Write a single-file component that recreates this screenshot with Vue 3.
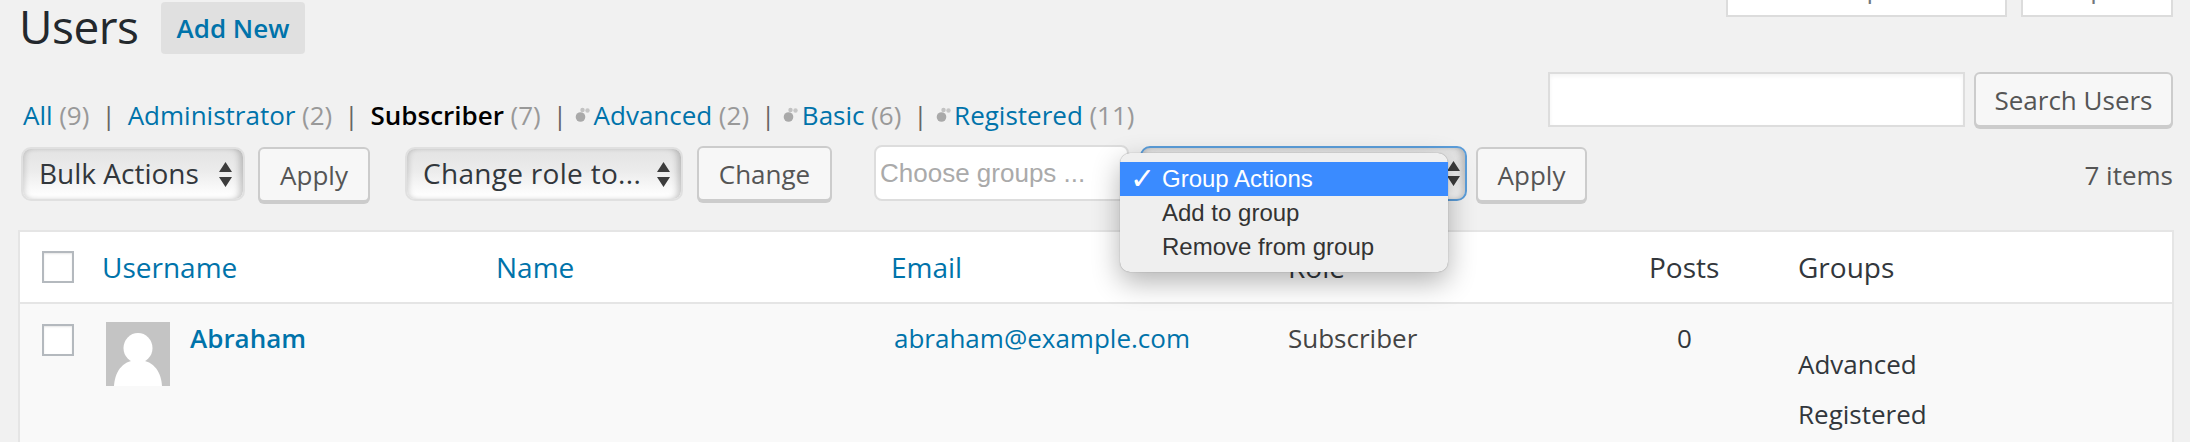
<script setup>
const tabs = [
  { label: 'All', count: 9, icon: false },
  { label: 'Administrator', count: 2, icon: false },
  { label: 'Subscriber', count: 7, icon: false, current: true },
  { label: 'Advanced', count: 2, icon: true },
  { label: 'Basic', count: 6, icon: true },
  { label: 'Registered', count: 11, icon: true }
]
</script>

<template>
  <div class="page">
    <header class="head">
      <div class="title-wrap">
        <h1>Users</h1>
        <a class="add-new">Add New</a>
      </div>
      <div class="meta">
        <div class="meta-btn screen"><span>Screen Options</span></div>
        <div class="meta-btn help"><span>Help</span></div>
      </div>
    </header>

    <div class="filter-row">
      <ul class="subnav">
        <li v-for="(t, i) in tabs" :key="t.label" class="tab">
          <span v-if="i" class="sep">|</span>
          <svg v-if="t.icon" class="dots" width="15" height="16" viewBox="0 0 15 16">
            <circle cx="5.5" cy="10" r="4.8" fill="#a9a9a9" />
            <circle cx="7.5" cy="3" r="2.2" fill="#c2c2c2" />
            <circle cx="12.5" cy="3.5" r="2.2" fill="#c6c6c6" />
          </svg>
          <a :class="{ current: t.current }">{{ t.label }}</a>
          <span class="count">({{ t.count }})</span>
        </li>
      </ul>
      <div class="search">
        <input class="search-input" type="text" />
        <button class="btn search-btn">Search Users</button>
      </div>
    </div>

    <div class="tablenav">
      <div class="select bulk">
        <span>Bulk Actions</span>
        <svg class="arrows" width="13" height="25" viewBox="0 0 13 25"><path d="M6.5 0 13 10H0zM0 15h13L6.5 25z" /></svg>
      </div>
      <button class="btn apply-one">Apply</button>
      <div class="select role">
        <span>Change role to...</span>
        <svg class="arrows" width="13" height="25" viewBox="0 0 13 25"><path d="M6.5 0 13 10H0zM0 15h13L6.5 25z" /></svg>
      </div>
      <button class="btn change">Change</button>
      <input class="groups-input" type="text" placeholder="Choose groups ..." />
      <div class="select group-select">
        <span>Group Actions</span>
        <svg class="arrows" width="13" height="25" viewBox="0 0 13 25"><path d="M6.5 0 13 10H0zM0 15h13L6.5 25z" /></svg>
        <div class="menu">
          <div class="menu-item active"><span class="check">✓</span>Group Actions</div>
          <div class="menu-item">Add to group</div>
          <div class="menu-item">Remove from group</div>
        </div>
      </div>
      <button class="btn apply-two">Apply</button>
      <span class="items">7 items</span>
    </div>

    <section class="table">
      <div class="row thead">
        <div class="cell"><span class="checkbox"></span></div>
        <a class="cell">Username</a>
        <a class="cell">Name</a>
        <a class="cell">Email</a>
        <div class="cell plain">Role</div>
        <div class="cell plain">Posts</div>
        <div class="cell plain">Groups</div>
      </div>
      <div class="row tbody">
        <div class="cell"><span class="checkbox"></span></div>
        <div class="cell user">
          <svg class="avatar" width="64" height="64" viewBox="0 0 64 64">
            <rect width="64" height="64" fill="#c4c4c4" />
            <ellipse cx="32" cy="26" rx="14.5" ry="15" fill="#fff" />
            <path d="M8 64C9 47 19 38 32 38s23 9 24 26z" fill="#fff" />
          </svg>
          <a class="username">Abraham</a>
        </div>
        <div class="cell"></div>
        <a class="cell email">abraham@example.com</a>
        <div class="cell plain role-cell">Subscriber</div>
        <div class="cell plain posts">0</div>
        <div class="cell plain groups">
          <span>Advanced</span>
          <span>Registered</span>
        </div>
      </div>
    </section>
  </div>
</template>

<style scoped>
.page {
  box-sizing: border-box;
  height: 442px;
  overflow: hidden;
  padding: 0 17px 0 18px;
  background: #f1f1f1;
  color: #32373c;
  font-family: "Open Sans", "Liberation Sans", sans-serif;
  font-size: 26px;
  line-height: 36px;
}
a { color: #0073aa; }

.head {
  display: flex;
  justify-content: space-between;
  height: 54px;
}
.title-wrap {
  display: flex;
  align-items: flex-start;
  padding-left: 1px;
  padding-top: 2px;
}
h1 {
  margin: -2px 0 0;
  font-size: 46px;
  font-weight: 400;
  line-height: 52px;
  color: #23282d;
  letter-spacing: -0.5px;
}
.add-new {
  margin-left: 22px;
  padding: 0 16px;
  height: 52px;
  line-height: 52px;
  background: #e0e0e0;
  border-radius: 4px;
  font-weight: 600;
  box-sizing: border-box;
  width: 144px;
  white-space: nowrap;
}
.meta {
  display: flex;
  gap: 14px;
}
.meta-btn {
  box-sizing: border-box;
  height: 17px;
  background: #fff;
  border: 2px solid #dcdcdc;
  border-top: 0;
  display: flex;
  align-items: flex-end;
  overflow: hidden;
  color: #72777c;
  white-space: nowrap;
}
.meta-btn span { display: block; line-height: 36px; margin-bottom: 9px; }
.screen { width: 281px; padding-left: 29px; }
.help { width: 152px; padding-left: 27px; }

.filter-row {
  display: flex;
  justify-content: space-between;
  height: 57px;
  margin-top: 18px;
}
.subnav {
  display: flex;
  list-style: none;
  margin: 25px 0 0 5px;
  padding: 0;
  height: 36px;
  white-space: nowrap;
}
.tab { display: flex; align-items: center; }
.sep {
  color: #666;
  margin: 0 12px;
}
.dots { margin: 0 3.5px 0 -4px; }
.current { color: #000; font-weight: 600; }
.count { color: #999; margin-left: 6.6px; }

.search { display: flex; gap: 9px; }
.search-input {
  box-sizing: border-box;
  width: 417px;
  height: 55px;
  border: 2px solid #ddd;
  background: #fff;
  box-shadow: inset 0 2px 4px rgba(0, 0, 0, 0.05);
  padding: 0;
  outline: none;
}

.btn {
  box-sizing: border-box;
  height: 55px;
  background: #f7f7f7;
  border: 2px solid #ccc;
  border-radius: 6px;
  box-shadow: 0 2px 0 #ccc;
  color: #555;
  font: inherit;
  font-size: 26px;
  padding: 0;
  margin: 0;
}
.search-btn { width: 199px; }

.tablenav {
  display: flex;
  align-items: flex-start;
  height: 57px;
  margin-top: 18px;
  padding-left: 3px;
}
.select {
  position: relative;
  box-sizing: border-box;
  height: 54px;
  display: flex;
  align-items: center;
  justify-content: space-between;
  border: 2px solid #e0e0e0;
  border-radius: 10px;
  background: linear-gradient(#e3e3e3, #ececec 45%, #fdfdfd 90%);
  box-shadow: inset 4px 0 6px -3px rgba(0, 0, 0, 0.18), inset -6px 0 7px -3px rgba(0, 0, 0, 0.22);
  color: #32373c;
  font-size: 28px;
  white-space: nowrap;
}
.select > span { margin-bottom: 2px; }
.arrows { fill: #3c3c3c; flex: none; }
.bulk { width: 224px; padding: 0 11px 0 16px; }
.apply-one { width: 112px; margin-left: 13px; }
.role { width: 278px; padding: 0 11px 0 16px; margin-left: 35px; }
.role > span { letter-spacing: 0.3px; }
.change { width: 135px; margin-left: 14px; margin-top: -1px; }
.groups-input {
  box-sizing: border-box;
  width: 255px;
  height: 56px;
  margin: -2px 0 0 42px;
  padding: 0 4px;
  border: 2px solid #ddd;
  border-radius: 8px;
  background: #fff;
  font-family: "Liberation Sans", Arial, sans-serif;
  font-size: 26px;
  outline: none;
}
.groups-input::placeholder { color: #aaa; opacity: 1; }
.group-select {
  width: 327px;
  height: 55px;
  margin-left: 11px;
  margin-top: -1px;
  padding: 0 5px 0 16px;
  border-color: #5b9dd9;
}
.menu {
  position: absolute;
  z-index: 2;
  left: -22px;
  top: 5px;
  width: 328px;
  height: 119px;
  box-sizing: border-box;
  padding-top: 9px;
  background: #efefef;
  border-radius: 10px;
  box-shadow: 0 0 1px rgba(0, 0, 0, 0.45), 0 10px 28px rgba(0, 0, 0, 0.3);
  font-family: "Liberation Sans", Arial, sans-serif;
  font-size: 24px;
  line-height: 34px;
  color: #333;
}
.menu-item { position: relative; padding-left: 42px; height: 34px; }
.menu-item.active { background: #3a8bff; color: #fff; }
.check {
  position: absolute;
  left: 10px;
  top: 0;
  font-family: "DejaVu Sans", sans-serif;
  font-size: 30px;
}
.apply-two { width: 111px; margin-left: 9px; }
.items { margin-left: auto; color: #555; line-height: 56px; }

.table {
  margin-top: 26px;
  width: 2156px;
  box-sizing: border-box;
  border: 2px solid #e5e5e5;
  border-bottom: 0;
  background: #f9f9f9;
  height: 250px;
}
.row {
  display: grid;
  grid-template-columns: 82px 394px 395px 397px 361px 149px 1fr;
}
.thead {
  height: 72px;
  box-sizing: border-box;
  background: #fff;
  border-bottom: 2px solid #e5e5e5;
  align-items: center;
  font-size: 28px;
}
.tbody {
  padding-top: 16px;
  align-items: start;
}
.checkbox {
  display: block;
  box-sizing: border-box;
  width: 32px;
  height: 32px;
  margin-left: 22px;
  border: 2px solid #b4b9be;
  background: #fff;
  box-shadow: inset 0 1px 2px rgba(0, 0, 0, 0.1);
}
.tbody .checkbox { margin-top: 4px; }
.plain { color: #32373c; }
.user { display: flex; align-items: flex-start; }
.avatar { margin: 2px 20px 0 4px; flex: none; }
.username { font-weight: 600; }
.email { margin-left: 3px; }
.role-cell { color: #444; }
.posts { padding-left: 28px; }
.groups {
  display: flex;
  flex-direction: column;
  gap: 14px;
  padding-top: 26px;
}
</style>

<style>
html, body { margin: 0; overflow: hidden; background: #f1f1f1; }
</style>
